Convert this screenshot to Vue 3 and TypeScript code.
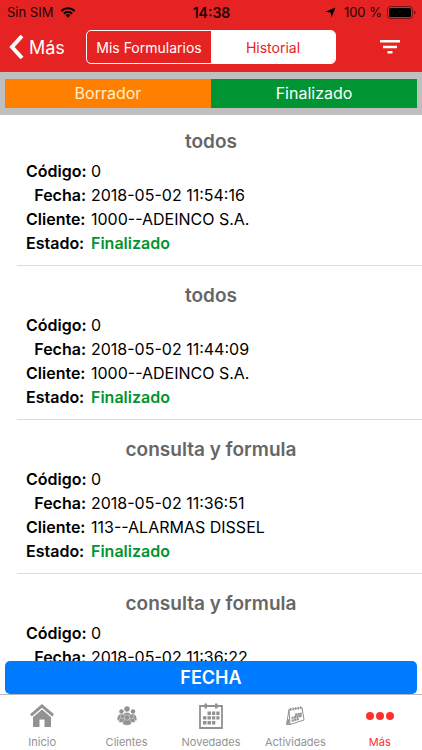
<script setup lang="ts">
import { ref } from 'vue'

interface FormRecord {
  title: string
  code: string
  date: string
  client: string
  status: string
}

const records: FormRecord[] = [
  { title: 'todos', code: '0', date: '2018-05-02 11:54:16', client: '1000--ADEINCO S.A.', status: 'Finalizado' },
  { title: 'todos', code: '0', date: '2018-05-02 11:44:09', client: '1000--ADEINCO S.A.', status: 'Finalizado' },
  { title: 'consulta y formula', code: '0', date: '2018-05-02 11:36:51', client: '113--ALARMAS DISSEL', status: 'Finalizado' },
  { title: 'consulta y formula', code: '0', date: '2018-05-02 11:36:22', client: '113--ALARMAS DISSEL', status: 'Finalizado' },
]

const segments = ['Mis Formularios', 'Historial']
const activeSegment = ref('Historial')

const tabs = [
  { id: 'home', label: 'Inicio' },
  { id: 'clients', label: 'Clientes' },
  { id: 'news', label: 'Novedades' },
  { id: 'activities', label: 'Actividades' },
  { id: 'more', label: 'Más' },
]
const activeTab = ref('more')
</script>

<template>
  <div class="screen">
    <header class="top">
      <div class="status">
        <div class="status-side">
          <span>Sin SIM</span>
          <svg class="wifi" viewBox="0 0 16 12" aria-hidden="true">
            <path d="M0.6 4.2a10.5 10.5 0 0 1 14.8 0L13.9 5.8a8.3 8.3 0 0 0-11.8 0z" />
            <path d="M3.1 6.8a6.9 6.9 0 0 1 9.8 0l-1.6 1.6a4.7 4.7 0 0 0-6.6 0z" />
            <path d="M5.6 9.3a3.4 3.4 0 0 1 4.8 0L8 11.7z" />
          </svg>
        </div>
        <strong class="clock">14:38</strong>
        <div class="status-side status-end">
          <svg class="arrow" viewBox="0 0 12 12" aria-hidden="true"><path d="M11.5 0.5 7 11.5 6.2 6 0.5 5.2z" /></svg>
          <span>100 %</span>
          <svg class="battery" viewBox="0 0 29 13" aria-hidden="true">
            <rect x="0.5" y="0.5" width="25" height="12" rx="3" fill="none" stroke="#7d1011" />
            <rect x="2" y="2" width="22" height="9" rx="1.5" />
            <path d="M27 4.5q1.6 0.6 1.6 2t-1.6 2z" fill="#7d1011" />
          </svg>
        </div>
      </div>
      <nav class="nav">
        <button class="back" type="button">
          <svg viewBox="0 0 15 26" aria-hidden="true"><path d="M13 2 3 13l10 11" /></svg>
          <span>Más</span>
        </button>
        <div class="segments">
          <button
            v-for="segment in segments"
            :key="segment"
            type="button"
            class="segment"
            :class="{ active: segment === activeSegment }"
            @click="activeSegment = segment"
          >{{ segment }}</button>
        </div>
        <button class="filter" type="button" aria-label="Filtrar">
          <svg viewBox="0 0 22 14" aria-hidden="true"><path d="M1 0h20v2.5H1zM4 5.8h14v2.4H4zM8.5 11h5v2.5h-5z" /></svg>
        </button>
      </nav>
    </header>

    <div class="legend">
      <div class="draft">Borrador</div>
      <div class="done">Finalizado</div>
    </div>

    <main class="list">
      <article v-for="record in records" :key="record.date" class="record">
        <h2>{{ record.title }}</h2>
        <dl>
          <dt>Código:</dt><dd>{{ record.code }}</dd>
          <dt class="date-label">Fecha:</dt><dd>{{ record.date }}</dd>
          <dt>Cliente:</dt><dd>{{ record.client }}</dd>
          <dt>Estado:</dt><dd class="finished">{{ record.status }}</dd>
        </dl>
      </article>
    </main>

    <button class="date-button" type="button">FECHA</button>

    <nav class="tabs">
      <button
        v-for="tab in tabs"
        :key="tab.id"
        type="button"
        class="tab"
        :class="{ active: tab.id === activeTab }"
        @click="activeTab = tab.id"
      >
        <svg viewBox="0 0 28 28" aria-hidden="true">
          <template v-if="tab.id === 'home'">
            <path d="M14 2 2 12.2l1.8 2.2L14 5.8l10.200 8.600 1.800-2.200z" />
            <path d="M14 7.600 5 15.200V25h6.500v-7.500h5V25H23v-9.800z" />
          </template>
          <template v-else-if="tab.id === 'clients'">
            <circle cx="14" cy="7" r="2.700" />
            <circle cx="8.500" cy="9.500" r="2.300" /><circle cx="20" cy="9.500" r="2.300" />
            <path d="M4.500 18.500q-.5-6.500 4-6.500 2 0 2.700 2L9 18.500zM23.500 18.500q.5-6.500-4-6.500-2 0-2.700 2L19 18.500zM10 13q1-2.500 4-2.500t4 2.500l-1 4h-6z" />
            <g stroke="#fff" stroke-width="0.4">
              <path d="M6 20.500q-.5-5 3.500-5t3.500 5zM15 20.500q-.5-5 3.500-5t3.500 5z" />
              <circle cx="9.500" cy="14.500" r="2.300" /><circle cx="18.500" cy="14.500" r="2.300" />
              <path d="M9.800 22.500q-.3-5.500 4.200-5.500t4.200 5.500q-4.200 1.500-8.400 0z" />
              <circle cx="14" cy="15.500" r="2.800" />
            </g>
          </template>
          <template v-else-if="tab.id === 'news'">
            <path d="M3 4h22v22H3z" fill="none" stroke="currentColor" stroke-width="1.800" />
            <path d="M7.500 1.500h2.500v5H7.500zM18 1.500h2.500v5H18z" />
            <path d="M10.500 9.500H14V13h-3.500zM15 9.500h3.300V13H15zM19.300 9.500h3.200V13h-3.200zM6 14.200h3.500v3.400H6zM10.500 14.200H14v3.400h-3.500zM15 14.200h3.300v3.400H15zM19.300 14.200h3.200v3.400h-3.200zM6 19h3.500v3.400H6zM10.500 19H14v3.400h-3.500zM15 19h3.300v3.400H15z" />
          </template>
          <template v-else-if="tab.id === 'activities'">
            <path d="M8 7.500 21 5.500 23 18 9 22.500H5.500L8 7.500l1 15" fill="none" stroke="currentColor" stroke-width="1" stroke-linejoin="round" />
            <path d="m6 20 .8-3 1.700.8v4H5.600z" />
            <path d="m9.500 6 .4 3M12 5.600l.4 3M14.500 5.200l.4 3M17 4.800l.4 3M19.500 4.400l.4 3" fill="none" stroke="currentColor" stroke-width="1" />
            <path d="m14 12.800 6.800-1.300M10.500 16l10.500-2.300M10.700 18.800l7-1.900" fill="none" stroke="currentColor" stroke-width="2.200" stroke-dasharray="2.200 0.400" />
          </template>
          <template v-else>
            <circle cx="4" cy="14" r="4" /><circle cx="14" cy="14" r="4" /><circle cx="24" cy="14" r="4" />
          </template>
        </svg>
        <span>{{ tab.label }}</span>
      </button>
    </nav>
  </div>
</template>

<style>
body {
  margin: 0;
}
</style>

<style scoped>
* {
  box-sizing: border-box;
}

.screen {
  display: flex;
  flex-direction: column;
  height: 100vh;
  overflow: hidden;
  background: #fff;
  color: #000;
  font-family: Inter, "Liberation Sans", sans-serif;
}

button {
  margin: 0;
  padding: 0;
  border: 0;
  background: none;
  color: inherit;
  font: inherit;
}

.top {
  flex: none;
  background: #e62323;
}

.status {
  display: grid;
  grid-template-columns: 1fr auto 1fr;
  align-items: center;
  height: 24px;
  padding: 0 6px 0 7px;
  font-size: 13px;
  color: #210304;
}

.status-side {
  display: flex;
  align-items: center;
  gap: 7px;
}

.status-end {
  justify-content: flex-end;
  gap: 5px;
}

.clock {
  font-size: 14px;
  font-weight: 600;
}

.wifi {
  width: 16px;
  height: 12px;
}

.arrow {
  width: 11px;
  height: 11px;
  margin-right: 3px;
}

.battery {
  width: 29px;
  height: 13px;
}

.nav {
  display: grid;
  grid-template-columns: 86px 250px 1fr;
  align-items: center;
  height: 48px;
  padding-bottom: 2px;
  color: #fff;
}

.back {
  display: flex;
  align-items: center;
  gap: 5px;
  padding-left: 9px;
  font-size: 18px;
}

.back svg {
  width: 15px;
  height: 26px;
  fill: none;
  stroke: currentColor;
  stroke-width: 4;
}

.segments {
  display: grid;
  grid-template-columns: 1fr 1fr;
  height: 34px;
  border: 1px solid #fff;
  border-radius: 5px;
  overflow: hidden;
}

.segment {
  font-size: 14px;
  white-space: nowrap;
}

.segment.active {
  background: #fff;
  color: #e62323;
}

.filter {
  display: flex;
  justify-self: end;
  margin-right: 21px;
}

.filter svg {
  width: 22px;
  height: 14px;
  fill: currentColor;
}

.legend {
  display: grid;
  flex: none;
  grid-template-columns: 1fr 1fr;
  padding: 7px 5px;
  background: #bfbfbf;
  color: #fff;
  font-size: 16px;
  line-height: 29px;
  text-align: center;
}

.draft {
  background: #ff8000;
  color: #fff0c8;
}

.done {
  background: #009432;
}

.list {
  flex: 1;
  min-height: 0;
  overflow-y: auto;
  scrollbar-width: none;
}

.record {
  margin-left: 17px;
  padding: 18px 0 10px 9px;
  border-bottom: 1px solid #dcdcdc;
}

.record:first-child {
  padding-top: 15px;
}

h2 {
  margin: 0 0 5px -26px;
  color: #666;
  font-size: 19px;
  font-weight: 600;
  line-height: 24px;
  text-align: center;
}

dl {
  display: grid;
  grid-template-columns: 60px 1fr;
  column-gap: 5px;
  margin: 0;
  font-size: 16px;
  line-height: 24px;
}

dt {
  font-weight: 600;
  white-space: nowrap;
}

dd {
  margin: 0;
}

.date-label {
  text-align: right;
}

.finished {
  color: #009432;
  font-weight: 600;
}

.date-button {
  flex: none;
  height: 33px;
  margin: 0 5px;
  border-radius: 5px;
  background: #007aff;
  color: #fff;
  font-size: 18px;
  font-weight: 600;
}

.tabs {
  display: grid;
  flex: none;
  grid-template-columns: repeat(5, 1fr);
  height: 56px;
  border-top: 1px solid #b8b8b8;
}

.tab {
  display: flex;
  flex-direction: column;
  align-items: center;
  gap: 5px;
  padding-top: 7px;
  color: #929292;
  font-size: 11px;
  line-height: 14px;
}

.tab svg {
  width: 28px;
  height: 28px;
  fill: currentColor;
}

.tab.active {
  color: #ff3030;
}
</style>
